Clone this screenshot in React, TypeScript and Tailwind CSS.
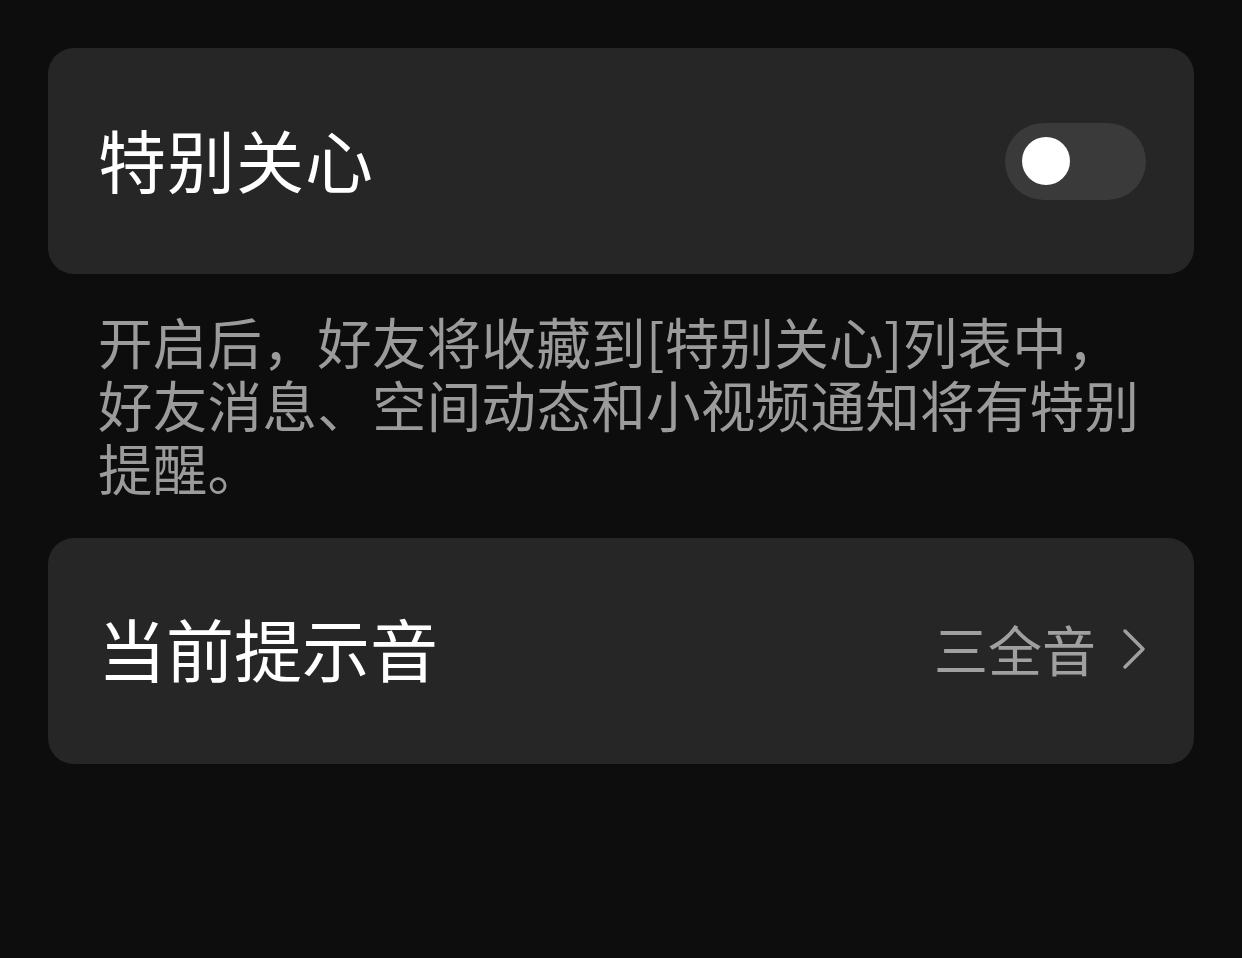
import React from "react";

export default function App() {
  const font = { fontFamily: '"Noto Sans CJK SC", "Noto Sans", sans-serif' };
  return (
    <div className="w-[1242px] h-[958px] bg-[#0d0d0d] overflow-hidden px-[48px] pt-[48px]" style={font}>
      <div className="h-[226px] rounded-[26px] bg-[#262626] flex items-center justify-between pl-[50px] pr-[48px]">
        <div className="text-[68px] leading-none text-white tracking-[1px] -mt-[4px]">特别关心</div>
        <div className="w-[141px] h-[77px] rounded-full bg-[#3a3a3a] flex items-center pl-[17px]">
          <div className="w-[48px] h-[48px] rounded-full bg-white" />
        </div>
      </div>
      <div className="pl-[50px] pt-[35px] text-[54.5px] leading-[63px] tracking-[0.3px] text-[#9b9b9b] whitespace-nowrap">
        <div>开启后，好友将收藏到[特别关心]列表中，</div>
        <div>好友消息、空间动态和小视频通知将有特别</div>
        <div>提醒。</div>
      </div>
      <div className="mt-[40px] h-[226px] rounded-[26px] bg-[#262626] flex items-center justify-between pl-[50px] pr-[48px]">
        <div className="text-[68px] leading-none text-white -mt-[6px]">当前提示音</div>
        <div className="flex items-center gap-[26px] -mt-[4px]">
          <span className="text-[54px] leading-none text-[#a0a0a0]">三全音</span>
          <svg width="24" height="42" viewBox="0 0 24 42" fill="none">
            <path d="M3 3 L21 21 L3 39" stroke="#a0a0a0" strokeWidth="3.5" strokeLinecap="round" strokeLinejoin="round" />
          </svg>
        </div>
      </div>
    </div>
  );
}
